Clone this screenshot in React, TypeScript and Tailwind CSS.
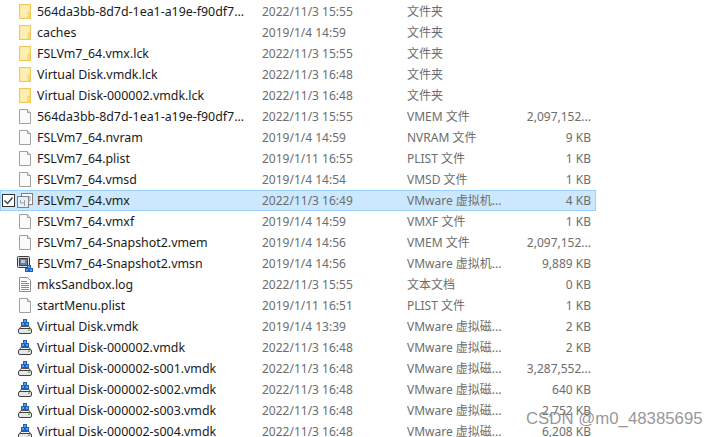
type Kind = 'folder' | 'file' | 'vmx' | 'vmsn' | 'log' | 'disk';

type Row = {
  kind: Kind;
  name: string;
  date: string;
  type: string;
  size?: string;
  selected?: boolean;
};

const rows: Row[] = [
  { kind: 'folder', name: '564da3bb-8d7d-1ea1-a19e-f90df7...', date: '2022/11/3 15:55', type: '文件夹' },
  { kind: 'folder', name: 'caches', date: '2019/1/4 14:59', type: '文件夹' },
  { kind: 'folder', name: 'FSLVm7_64.vmx.lck', date: '2022/11/3 15:55', type: '文件夹' },
  { kind: 'folder', name: 'Virtual Disk.vmdk.lck', date: '2022/11/3 16:48', type: '文件夹' },
  { kind: 'folder', name: 'Virtual Disk-000002.vmdk.lck', date: '2022/11/3 16:48', type: '文件夹' },
  { kind: 'file', name: '564da3bb-8d7d-1ea1-a19e-f90df7...', date: '2022/11/3 15:55', type: 'VMEM 文件', size: '2,097,152...' },
  { kind: 'file', name: 'FSLVm7_64.nvram', date: '2019/1/4 14:59', type: 'NVRAM 文件', size: '9 KB' },
  { kind: 'file', name: 'FSLVm7_64.plist', date: '2019/1/11 16:55', type: 'PLIST 文件', size: '1 KB' },
  { kind: 'file', name: 'FSLVm7_64.vmsd', date: '2019/1/4 14:54', type: 'VMSD 文件', size: '1 KB' },
  { kind: 'vmx', name: 'FSLVm7_64.vmx', date: '2022/11/3 16:49', type: 'VMware 虚拟机...', size: '4 KB', selected: true },
  { kind: 'file', name: 'FSLVm7_64.vmxf', date: '2019/1/4 14:59', type: 'VMXF 文件', size: '1 KB' },
  { kind: 'file', name: 'FSLVm7_64-Snapshot2.vmem', date: '2019/1/4 14:56', type: 'VMEM 文件', size: '2,097,152...' },
  { kind: 'vmsn', name: 'FSLVm7_64-Snapshot2.vmsn', date: '2019/1/4 14:56', type: 'VMware 虚拟机...', size: '9,889 KB' },
  { kind: 'log', name: 'mksSandbox.log', date: '2022/11/3 15:55', type: '文本文档', size: '0 KB' },
  { kind: 'file', name: 'startMenu.plist', date: '2019/1/11 16:51', type: 'PLIST 文件', size: '1 KB' },
  { kind: 'disk', name: 'Virtual Disk.vmdk', date: '2019/1/4 13:39', type: 'VMware 虚拟磁...', size: '2 KB' },
  { kind: 'disk', name: 'Virtual Disk-000002.vmdk', date: '2022/11/3 16:48', type: 'VMware 虚拟磁...', size: '2 KB' },
  { kind: 'disk', name: 'Virtual Disk-000002-s001.vmdk', date: '2022/11/3 16:48', type: 'VMware 虚拟磁...', size: '3,287,552...' },
  { kind: 'disk', name: 'Virtual Disk-000002-s002.vmdk', date: '2022/11/3 16:48', type: 'VMware 虚拟磁...', size: '640 KB' },
  { kind: 'disk', name: 'Virtual Disk-000002-s003.vmdk', date: '2022/11/3 16:48', type: 'VMware 虚拟磁...', size: '2,752 KB' },
  { kind: 'disk', name: 'Virtual Disk-000002-s004.vmdk', date: '2022/11/3 16:48', type: 'VMware 虚拟磁...', size: '6,208 KB' },
];

function Blocks({ x, y }: { x: number; y: number }) {
  return (
    <g fill="#5aa0e8" stroke="#1c62ba">
      <rect x={x + 2} y={y} width="3" height="3" />
      <rect x={x} y={y + 3} width="3" height="3" />
      <rect x={x + 4} y={y + 3} width="3" height="3" />
    </g>
  );
}

function FileIcon({ kind }: { kind: Kind }) {
  if (kind === 'folder') {
    return (
      <svg width="16" height="16" viewBox="0 0 16 16">
        <rect x="2.5" y="0.5" width="11" height="14" fill="#fde9a0" stroke="#eec95a" />
        <rect x="4" y="2" width="8" height="11" fill="#fdeeb4" />
        <rect x="11" y="8" width="2" height="6" fill="#fbe596" stroke="#eec95a" strokeWidth="0.7" />
      </svg>
    );
  }
  if (kind === 'file') {
    return (
      <svg width="16" height="16" viewBox="0 0 16 16">
        <path d="M2.5 0.5h8l3 3v11h-11z" fill="#fafafa" stroke="#a0a0a0" />
        <path d="M10.5 0.5v3h3" fill="#e8e8e8" stroke="#a0a0a0" />
      </svg>
    );
  }
  if (kind === 'log') {
    return (
      <svg width="16" height="16" viewBox="0 0 16 16">
        <path d="M2.5 0.5h8l3 3v11h-11z" fill="#fff" stroke="#8e8e8e" />
        <path d="M4 4.5h6M4 6.5h8M4 8.5h8M4 10.5h8M4 12.5h8" stroke="#8a8a8a" />
      </svg>
    );
  }
  if (kind === 'vmx') {
    return (
      <svg width="16" height="16" viewBox="0 0 16 16">
        <rect x="4.5" y="0.5" width="11" height="11" fill="#f4f9fe" stroke="#808080" />
        <rect x="0.5" y="3.5" width="11" height="11" fill="#e4f1fc" stroke="#808080" />
        <path d="M3.5 7v3h4M7.5 7v6M13 3v5h-2" fill="none" stroke="#a0a0a0" />
      </svg>
    );
  }
  if (kind === 'vmsn') {
    return (
      <svg width="16" height="16" viewBox="0 0 16 16">
        <rect x="0.5" y="0.5" width="12" height="11" rx="1" fill="#d8dde4" stroke="#3c3c3c" />
        <rect x="2.5" y="2.5" width="8" height="7" fill="#6c7f9c" stroke="#444" />
        <rect x="4" y="4" width="4" height="3" fill="#b8c8dc" />
        <Blocks x={8.5} y={9.5} />
      </svg>
    );
  }
  return (
    <svg width="16" height="16" viewBox="0 0 16 16">
      <Blocks x={4.5} y={0.5} />
      <path d="M2.5 9.5l1.5-2h8l1.5 2" fill="#f0f0f0" stroke="#555" />
      <rect x="1.5" y="9.5" width="13" height="5" rx="1.5" fill="#e6e6e6" stroke="#444" />
      <rect x="11" y="10.5" width="2" height="1.5" fill="#6cc24a" />
    </svg>
  );
}

function FileRow({ row }: { row: Row }) {
  const bg = row.selected ? 'bg-[#cce8ff] border-[#99d1ff]' : 'border-transparent';
  return (
    <div className={`flex h-[21px] w-[596px] items-center border ${bg}`}>
      <div className="flex w-[14px] shrink-0 justify-end">
        {row.selected && (
          <div className="flex h-[13px] w-[13px] items-center justify-center border border-[#333] bg-white">
            <svg width="11" height="11" viewBox="0 0 11 11">
              <path d="M1.5 5.5l3 3 5-6" fill="none" stroke="#444" strokeWidth="1.4" />
            </svg>
          </div>
        )}
      </div>
      <div className="ml-[2px] flex w-[19px] shrink-0 items-center">
        <FileIcon kind={row.kind} />
      </div>
      <div className="ml-[1px] w-[225px] shrink-0 truncate text-[12.4px] leading-[16px] text-[#1a1a1a]">{row.name}</div>
      <div className="w-[145px] shrink-0 text-[#6d6d6d]">{row.date}</div>
      <div className="w-[107px] shrink-0 text-[#6d6d6d]">{row.type}</div>
      <div className="w-[77px] shrink-0 text-right text-[#6d6d6d]">{row.size}</div>
    </div>
  );
}

export default function App() {
  return (
    <div className="relative h-[437px] w-[717px] overflow-hidden bg-white pt-[1px] font-['Noto_Sans','Noto_Sans_CJK_SC',sans-serif] text-[12px] leading-none">
      {rows.map((row) => (
        <FileRow key={row.name + row.date + row.type} row={row} />
      ))}
      <div className="absolute left-[526px] top-[411px] font-['Liberation_Sans',sans-serif] text-[16.8px] leading-none text-[#8a8a8a]/90">
        CSDN @m0_48385695
      </div>
    </div>
  );
}
